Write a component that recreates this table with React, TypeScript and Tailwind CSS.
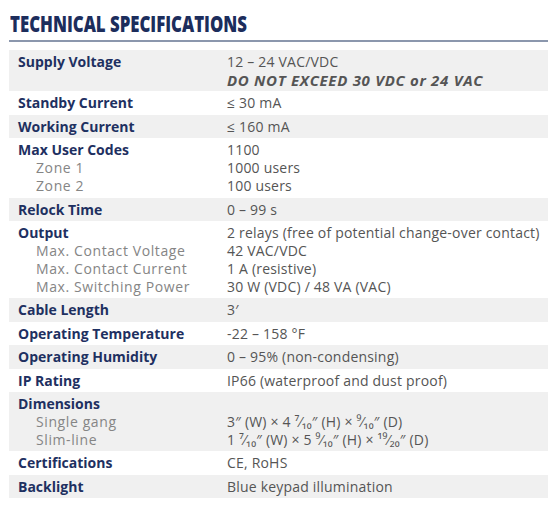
import React from "react";

type Row = {
  label: string;
  values: React.ReactNode[];
  subs?: string[];
};

const rows: Row[] = [
  {
    label: "Supply Voltage",
    values: [
      "12 – 24 VAC/VDC",
      <span className="font-bold italic text-[15px] tracking-[0.7px]">DO NOT EXCEED 30 VDC or 24 VAC</span>,
    ],
  },
  { label: "Standby Current", values: ["≤ 30 mA"] },
  { label: "Working Current", values: ["≤ 160 mA"] },
  { label: "Max User Codes", values: ["1100", "1000 users", "100 users"], subs: ["Zone 1", "Zone 2"] },
  { label: "Relock Time", values: ["0 – 99 s"] },
  {
    label: "Output",
    values: [
      "2 relays (free of potential change-over contact)",
      "42 VAC/VDC",
      "1 A (resistive)",
      "30 W (VDC) / 48 VA (VAC)",
    ],
    subs: ["Max. Contact Voltage", "Max. Contact Current", "Max. Switching Power"],
  },
  { label: "Cable Length", values: ["3′"] },
  { label: "Operating Temperature", values: ["-22 – 158 °F"] },
  { label: "Operating Humidity", values: ["0 – 95% (non-condensing)"] },
  { label: "IP Rating", values: ["IP66 (waterproof and dust proof)"] },
  {
    label: "Dimensions",
    values: [
      "\u00a0",
      "3″ (W) × 4 ⁷⁄₁₀″ (H) × ⁹⁄₁₀″ (D)",
      "1 ⁷⁄₁₀″ (W) × 5 ⁹⁄₁₀″ (H) × ¹⁹⁄₂₀″ (D)",
    ],
    subs: ["Single gang", "Slim-line"],
  },
  { label: "Certifications", values: ["CE, RoHS"] },
  { label: "Backlight", values: ["Blue keypad illumination"] },
];

export default function App() {
  return (
    <div
      className="w-[559px] h-[506px] bg-white px-[9px] pt-[8px]"
      style={{ fontFamily: "'Open Sans', 'Noto Sans', sans-serif" }}
    >
      <h1 className="h-[28px] pl-[1px] text-[23px] leading-[28px] font-extrabold text-[#1c2d5c] whitespace-nowrap">
        <span className="inline-block origin-left scale-x-[0.73] pt-[1px]">TECHNICAL SPECIFICATIONS</span>
      </h1>
      <div className="mt-[4px] h-[2px] w-[539px] bg-[#8b97ad]" />
      <div className="mt-[8px] w-[539px] text-[14px] leading-[18px]">
        {rows.map((r, i) => (
          <div
            key={r.label}
            className={`flex pt-[3px] pb-[2.4px] ${i % 2 === 0 ? "bg-[#f0f0f0]" : "bg-white"}`}
          >
            <div className="w-[218px] shrink-0 pl-[9px]">
              <div className="font-bold text-[#1e3061] h-[18px]">{r.label}</div>
              {r.subs?.map((s) => (
                <div key={s} className="pl-[18px] text-[#858585] tracking-[0.6px] h-[18px]">
                  {s}
                </div>
              ))}
            </div>
            <div className="flex-1 text-[#555555] tracking-[0.2px]">
              {r.values.map((v, j) => (
                <div key={j} className="whitespace-nowrap h-[18px]">
                  {v}
                </div>
              ))}
            </div>
          </div>
        ))}
      </div>
    </div>
  );
}
